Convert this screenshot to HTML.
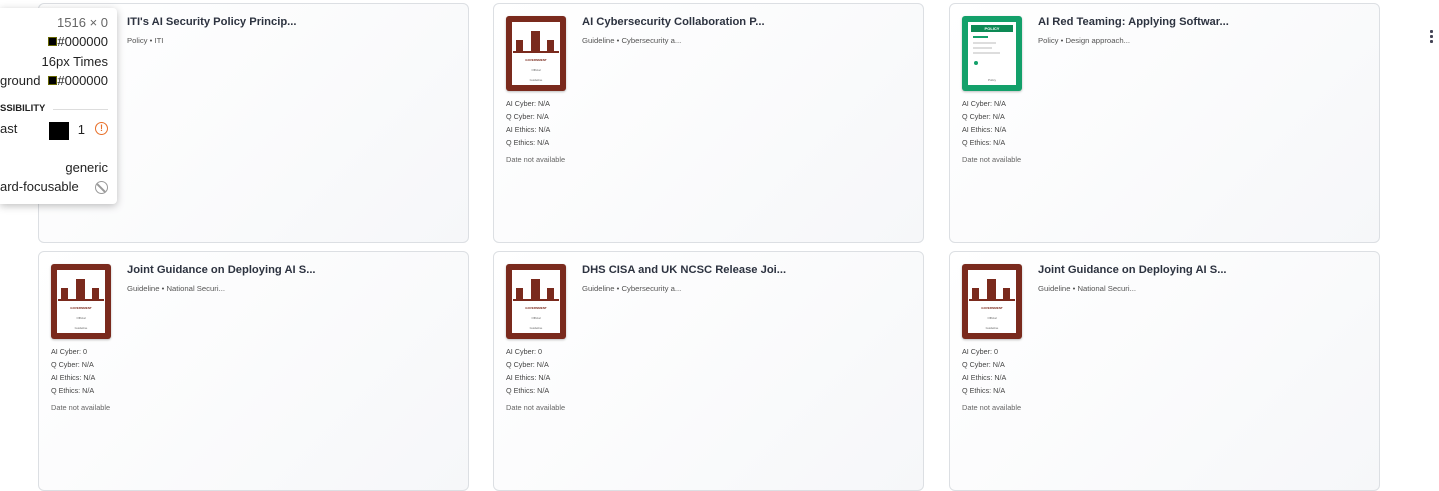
<!DOCTYPE html>
<html><head><style>
*{box-sizing:border-box;margin:0;padding:0}
body{width:1439px;height:431px;overflow:hidden;background:#fff;font-family:"Liberation Sans",sans-serif;position:relative}
.card{position:absolute;width:431px;height:240px;border:1px solid #dcdfe3;border-radius:6px;background:linear-gradient(135deg,#ffffff,#f6f7f9)}
.th{position:absolute;left:12px;top:12px;width:60px;height:75px;border-radius:3px;box-shadow:0 1px 2px rgba(0,0,0,.25)}
.gov{background:#7a2a1d}
.gov .in{position:absolute;left:6px;top:6px;width:48px;height:63px;background:#fff}
.bar{position:absolute;background:#7a2a1d}
.t{position:absolute;font-size:3px;color:#7a2a1d;left:0;width:48px;text-align:center;font-weight:bold}
.pol{background:#13a06a}
.pol .in{position:absolute;left:6px;top:6px;width:48px;height:63px;background:#fff}
.title{position:absolute;left:88px;top:12px;font-size:11.2px;font-weight:bold;color:#2d3340}
.sub{position:absolute;left:88px;top:32px;font-size:7.7px;color:#555}
.stats{position:absolute;left:12px;top:93px;font-size:7.2px;color:#444;line-height:13px}
.date{position:absolute;left:12px;top:151px;font-size:7.4px;color:#666}
.pop{position:absolute;left:0;top:8px;width:117px;height:196px;background:#fff;border-radius:0 4px 4px 0;box-shadow:0 2px 8px rgba(0,0,0,.25);font-size:13px;color:#222;z-index:5}
.pop div{position:absolute;right:9px}
</style></head><body>

<div class="card" style="left:38px;top:3px">
<div class="title">ITI's AI Security Policy Princip...</div>
<div class="sub">Policy • ITI</div>
</div>

<div class="pop">
<div style="top:7px;color:#666">1516 × 0</div>
<div style="top:26px"><span style="display:inline-block;width:9px;height:9px;background:#000;border:1px solid #660"></span>#000000</div>
<div style="top:46px">16px Times</div>
<div style="top:65px;right:auto;left:0">ground</div>
<div style="top:65px"><span style="display:inline-block;width:9px;height:9px;background:#000;border:1px solid #660"></span>#000000</div>
<div style="top:95px;right:auto;left:0;font-size:9.5px;font-weight:bold">SSIBILITY</div>
<div style="top:101px;right:9px;width:55px;height:1px;background:#ddd"></div>
<div style="top:113px;right:auto;left:0">ast</div>
<div style="top:114px;right:48px;width:20px;height:18px;background:#000"></div>
<div style="top:114px;right:32px">1</div>
<div style="top:114px;width:13px;height:13px;border:1.5px solid #e8702a;border-radius:50%;color:#e8702a;font-size:9px;text-align:center;line-height:10px;font-weight:bold">!</div>
<div style="top:152px">generic</div>
<div style="top:171px;right:auto;left:0">ard-focusable</div>
<div style="top:173px;width:13px;height:13px;border:1.5px solid #999;border-radius:50%;overflow:hidden"><span style="position:absolute;left:4px;top:-2px;width:1.5px;height:16px;background:#999;transform:rotate(-45deg)"></span></div>
</div>

<div class="card" style="left:493px;top:3px">
<div class="th gov"><div class="in"><div class="bar" style="left:4px;top:18px;width:7px;height:12px"></div><div class="bar" style="left:19px;top:9px;width:9px;height:21px"></div><div class="bar" style="left:35px;top:18px;width:7px;height:12px"></div><div class="bar" style="left:1px;top:29px;width:46px;height:2px"></div><div class="t" style="top:36px">GOVERNMENT</div><div class="t" style="top:46px;color:#666;font-weight:normal">Official</div><div class="t" style="top:56px;color:#666;font-weight:normal">Guideline</div></div></div>
<div class="title">AI Cybersecurity Collaboration P...</div>
<div class="sub">Guideline • Cybersecurity a...</div>
<div class="stats">AI Cyber: N/A<br>Q Cyber: N/A<br>AI Ethics: N/A<br>Q Ethics: N/A</div>
<div class="date">Date not available</div>
</div>

<div class="card" style="left:949px;top:3px">
<div class="th pol"><div class="in"><div style="position:absolute;left:3px;top:3px;width:42px;height:7px;background:#0d8a55;color:#fff;font-size:4px;font-weight:bold;text-align:center;line-height:7px">POLICY</div><div style="position:absolute;left:5px;top:14px;width:15px;height:2px;background:#13a06a"></div><div style="position:absolute;left:5px;top:20px;width:23px;height:1.5px;background:#ddd"></div><div style="position:absolute;left:5px;top:25px;width:19px;height:1.5px;background:#ddd"></div><div style="position:absolute;left:5px;top:30px;width:27px;height:1.5px;background:#ddd"></div><div style="position:absolute;left:6px;top:39px;width:4px;height:4px;border-radius:50%;background:#13a06a"></div><div class="t" style="top:56px;color:#666;font-weight:normal">Policy</div></div></div>
<div class="title">AI Red Teaming: Applying Softwar...</div>
<div class="sub">Policy • Design approach...</div>
<div class="stats">AI Cyber: N/A<br>Q Cyber: N/A<br>AI Ethics: N/A<br>Q Ethics: N/A</div>
<div class="date">Date not available</div>
</div>

<div style="position:absolute;left:1430px;top:30px;width:4px;height:14px">
<div style="width:3px;height:3px;background:#445;margin-bottom:2px;border-radius:1px"></div><div style="width:3px;height:3px;background:#445;margin-bottom:2px;border-radius:1px"></div><div style="width:3px;height:3px;background:#445;border-radius:1px"></div></div>

<div class="card" style="left:38px;top:251px">
<div class="th gov"><div class="in"><div class="bar" style="left:4px;top:18px;width:7px;height:12px"></div><div class="bar" style="left:19px;top:9px;width:9px;height:21px"></div><div class="bar" style="left:35px;top:18px;width:7px;height:12px"></div><div class="bar" style="left:1px;top:29px;width:46px;height:2px"></div><div class="t" style="top:36px">GOVERNMENT</div><div class="t" style="top:46px;color:#666;font-weight:normal">Official</div><div class="t" style="top:56px;color:#666;font-weight:normal">Guideline</div></div></div>
<div class="title">Joint Guidance on Deploying AI S...</div>
<div class="sub">Guideline • National Securi...</div>
<div class="stats">AI Cyber: 0<br>Q Cyber: N/A<br>AI Ethics: N/A<br>Q Ethics: N/A</div>
<div class="date">Date not available</div>
</div>

<div class="card" style="left:493px;top:251px">
<div class="th gov"><div class="in"><div class="bar" style="left:4px;top:18px;width:7px;height:12px"></div><div class="bar" style="left:19px;top:9px;width:9px;height:21px"></div><div class="bar" style="left:35px;top:18px;width:7px;height:12px"></div><div class="bar" style="left:1px;top:29px;width:46px;height:2px"></div><div class="t" style="top:36px">GOVERNMENT</div><div class="t" style="top:46px;color:#666;font-weight:normal">Official</div><div class="t" style="top:56px;color:#666;font-weight:normal">Guideline</div></div></div>
<div class="title">DHS CISA and UK NCSC Release Joi...</div>
<div class="sub">Guideline • Cybersecurity a...</div>
<div class="stats">AI Cyber: 0<br>Q Cyber: N/A<br>AI Ethics: N/A<br>Q Ethics: N/A</div>
<div class="date">Date not available</div>
</div>

<div class="card" style="left:949px;top:251px">
<div class="th gov"><div class="in"><div class="bar" style="left:4px;top:18px;width:7px;height:12px"></div><div class="bar" style="left:19px;top:9px;width:9px;height:21px"></div><div class="bar" style="left:35px;top:18px;width:7px;height:12px"></div><div class="bar" style="left:1px;top:29px;width:46px;height:2px"></div><div class="t" style="top:36px">GOVERNMENT</div><div class="t" style="top:46px;color:#666;font-weight:normal">Official</div><div class="t" style="top:56px;color:#666;font-weight:normal">Guideline</div></div></div>
<div class="title">Joint Guidance on Deploying AI S...</div>
<div class="sub">Guideline • National Securi...</div>
<div class="stats">AI Cyber: 0<br>Q Cyber: N/A<br>AI Ethics: N/A<br>Q Ethics: N/A</div>
<div class="date">Date not available</div>
</div>

</body></html>
